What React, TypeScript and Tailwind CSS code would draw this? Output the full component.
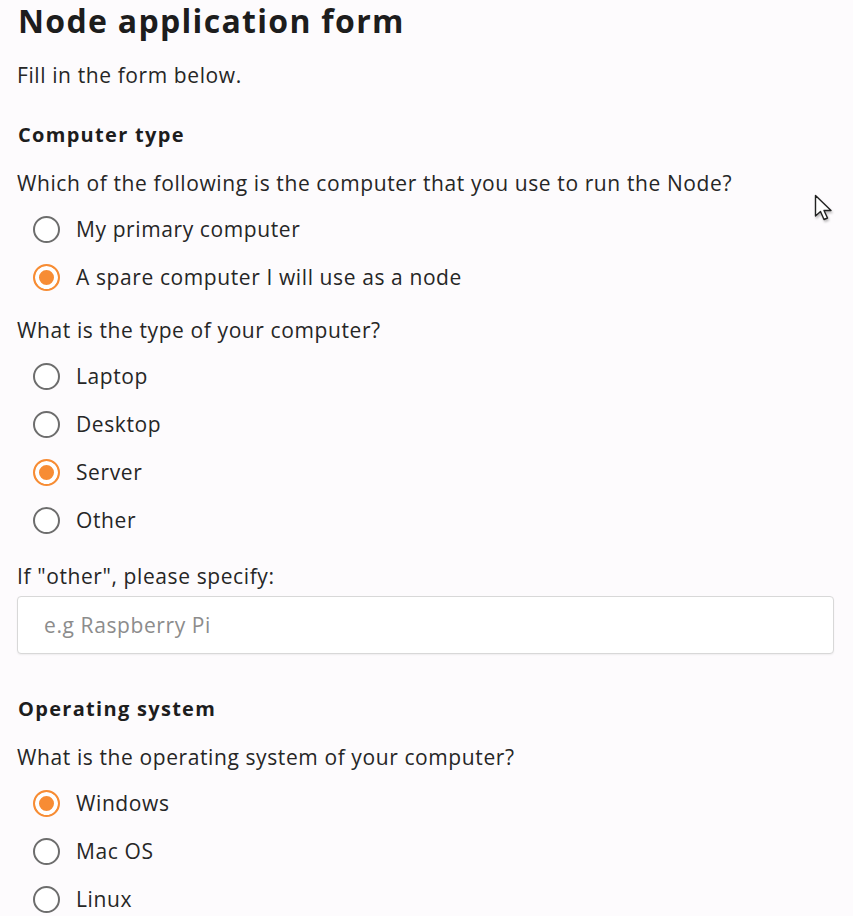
import { useState } from 'react';

type Option = { value: string; label: string };

function RadioGroup({
  name,
  options,
  value,
  onChange,
}: {
  name: string;
  options: Option[];
  value: string;
  onChange: (v: string) => void;
}) {
  return (
    <div className="flex flex-col pl-4 mt-2">
      {options.map((o) => (
        <label key={o.value} className="flex items-center gap-[16px] h-12 cursor-pointer">
          <input
            type="radio"
            name={name}
            value={o.value}
            checked={value === o.value}
            onChange={() => onChange(o.value)}
            className="appearance-none w-[27px] h-[27px] rounded-full border-[2.5px] border-[#6d6d6d] bg-white checked:border-[#f78c34] checked:bg-[#f78c34] checked:shadow-[inset_0_0_0_4px_#fff] shrink-0 m-0"
          />
          <span className="text-[21px] leading-7 tracking-[0.6px] text-[#262626]">{o.label}</span>
        </label>
      ))}
    </div>
  );
}

function Cursor() {
  return (
    <svg
      className="absolute left-[814px] top-[194px] drop-shadow-[1px_2px_1px_rgba(0,0,0,0.25)]"
      width="22"
      height="30"
      viewBox="0 0 22 30"
    >
      <path
        d="M1.5 1.5 L1.5 22 L6.5 17.5 L10 25.5 L13.5 24 L10 16.5 L17 16.5 Z"
        fill="#fff"
        stroke="#222"
        strokeWidth="1.4"
        strokeLinejoin="round"
      />
    </svg>
  );
}

const body = 'text-[21px] leading-7 tracking-[0.6px] text-[#262626]';
const heading = 'text-[20px] leading-7 font-bold tracking-[1.3px] text-[#1d1d1d]';

export default function App() {
  const [usage, setUsage] = useState('spare');
  const [kind, setKind] = useState('server');
  const [os, setOs] = useState('windows');

  return (
    <div
      className="relative min-h-screen bg-[#fdfbfd] text-[#1d1d1d] px-[17px]"
      style={{ fontFamily: '"Open Sans", "Noto Sans", sans-serif' }}
    >
      <h1 className="text-[32px] font-bold leading-[42px] tracking-[1.3px] pl-[1px]">Node application form</h1>
      <p className={`mt-[19px] ${body}`}>Fill in the form below.</p>

      <h2 className={`mt-[32px] pl-[1px] ${heading}`}>Computer type</h2>
      <p className={`mt-[20px] ${body}`}>
        Which of the following is the computer that you use to run the Node?
      </p>
      <RadioGroup
        name="usage"
        value={usage}
        onChange={setUsage}
        options={[
          { value: 'primary', label: 'My primary computer' },
          { value: 'spare', label: 'A spare computer I will use as a node' },
        ]}
      />

      <p className={`mt-[15px] ${body}`}>What is the type of your computer?</p>
      <RadioGroup
        name="kind"
        value={kind}
        onChange={setKind}
        options={[
          { value: 'laptop', label: 'Laptop' },
          { value: 'desktop', label: 'Desktop' },
          { value: 'server', label: 'Server' },
          { value: 'other', label: 'Other' },
        ]}
      />

      <label className={`block mt-[18px] ${body}`} htmlFor="other">
        If "other", please specify:
      </label>
      <input
        id="other"
        type="text"
        placeholder="e.g Raspberry Pi"
        className="block mt-[6px] w-[817px] h-[58px] rounded-[4px] border border-[#d8d8d8] bg-white px-[26px] text-[21px] tracking-[0.6px] shadow-[0_1px_2px_rgba(0,0,0,0.06)] placeholder:text-[#8c8c8c] outline-none"
      />

      <h2 className={`mt-[41px] pl-[1px] ${heading}`}>Operating system</h2>
      <p className={`mt-[20px] ${body}`}>What is the operating system of your computer?</p>
      <RadioGroup
        name="os"
        value={os}
        onChange={setOs}
        options={[
          { value: 'windows', label: 'Windows' },
          { value: 'mac', label: 'Mac OS' },
          { value: 'linux', label: 'Linux' },
        ]}
      />

      <Cursor />
    </div>
  );
}
